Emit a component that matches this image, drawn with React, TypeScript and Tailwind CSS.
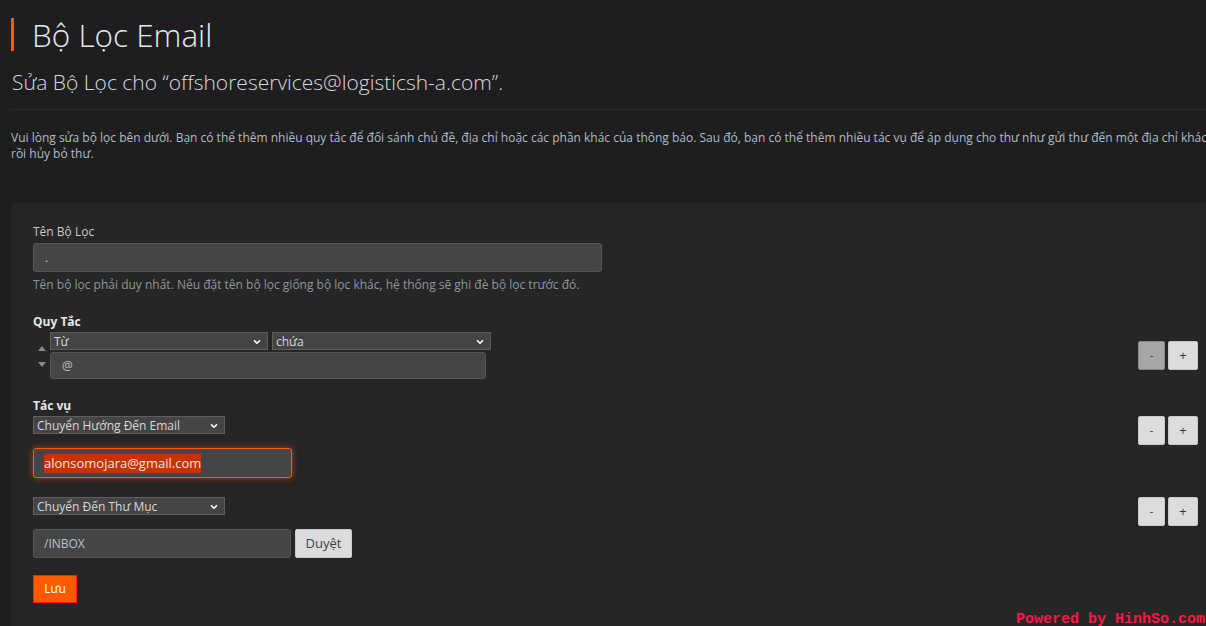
import { ChevronDown } from "lucide-react";

const font = { fontFamily: '"Open Sans", "Noto Sans", sans-serif' };

const Select = ({ value, width }: { value: string; width: string }) => {
  return (
    <div className={`relative h-[18px] ${width} border border-[#5e5e5e] bg-[#444] text-[12px] leading-[17px] text-[#d8d8d8]`}>
      <span className="pl-[3px]">{value}</span>
      <ChevronDown className="absolute right-[5px] top-[4px] h-[10px] w-[10px] text-white" strokeWidth={4} />
    </div>
  );
};

const PlusMinus = ({ disabled }: { disabled?: boolean }) => {
  return (
    <div className="flex gap-[3px]">
      <button
        className={
          disabled
            ? "w-[27px] h-[29px] rounded-[2px] border border-[#888] bg-[#a6a6a6] text-[11px] text-[#333]"
            : "w-[27px] h-[29px] rounded-[2px] border border-[#c8c8c8] bg-[#dcdcdc] text-[11px] text-[#333]"
        }
      >
        -
      </button>
      <button className="w-[30px] h-[29px] rounded-[2px] border border-[#c8c8c8] bg-[#dcdcdc] text-[13px] text-[#333]">
        +
      </button>
    </div>
  );
};

const App = () => {
  return (
    <div className="relative w-[1206px] h-[626px] overflow-hidden bg-[#1e1e1e]" style={font}>
      <div className="w-[1240px] pl-[11px]">
        <div className="mt-[18px] h-[33px] border-l-[3px] border-[#ff5a00] pl-[18px]">
          <h1 className="text-[31.5px] leading-[34px] font-light text-[#e6e9ee]">Bộ Lọc Email</h1>
        </div>
        <h2 className="mt-[18px] pl-[1px] text-[21px] leading-[26px] font-light text-[#d4dae2]">
          Sửa Bộ Lọc cho “offshoreservices@logisticsh-a.com”.
        </h2>
        <div className="mt-[14px] h-px bg-[#2b2b2b]" />
        <p className="mt-[20px] text-[12px] leading-[16px] text-[#aebccb]">
          Vui lòng sửa bộ lọc bên dưới. Bạn có thể thêm nhiều quy tắc để đối sánh chủ đề, địa chỉ hoặc các phần khác của
          thông báo. Sau đó, bạn có thể thêm nhiều tác vụ để áp dụng cho thư như gửi thư đến một địa chỉ khác,
          <br />
          rồi hủy bỏ thư.
        </p>

        <div className="mt-[41px] h-[500px] w-[1200px] rounded-tl-[4px] bg-[#262626] pl-[22px] pr-[13px] pt-[21px]">
          <div className="text-[12px] leading-[16px] text-[#c8c8c8]">Tên Bộ Lọc</div>
          <div className="mt-[3px] flex h-[29px] w-[569px] items-center rounded-[3px] border border-[#555] bg-[#454545] pl-[11px] text-[12px] text-[#ccc]">
            .
          </div>
          <div className="mt-[5px] text-[12px] leading-[16px] text-[#8e969e]">
            Tên bộ lọc phải duy nhất. Nếu đặt tên bộ lọc giống bộ lọc khác, hệ thống sẽ ghi đè bộ lọc trước đó.
          </div>

          <div className="mt-[21px] text-[12px] leading-[16px] font-bold text-[#e6e6e6]">Quy Tắc</div>
          <div className="mt-[2px] flex items-center justify-between">
            <div className="flex">
              <div className="flex w-[17px] flex-col items-center pt-[13px]">
                <svg width="10" height="6" viewBox="0 0 10 6">
                  <path d="M1 6 L5 1 L9 6 Z" fill="#8a8a8a" />
                </svg>
                <svg width="10" height="6" viewBox="0 0 10 6" className="mt-[11px]">
                  <path d="M1 0 L9 0 L5 5 Z" fill="#8a8a8a" />
                </svg>
              </div>
              <div className="flex flex-col gap-[2px]">
                <div className="flex gap-[4px]">
                  <Select value="Từ" width="w-[218px]" />
                  <Select value="chứa" width="w-[219px]" />
                </div>
                <div className="flex h-[27px] w-[436px] items-center rounded-[3px] border border-[#555] bg-[#454545] pl-[11px] text-[12px] text-[#b8c4d0]">
                  @
                </div>
              </div>
            </div>
            <PlusMinus disabled />
          </div>

          <div className="mt-[19px] text-[12px] leading-[16px] font-bold text-[#e6e6e6]">Tác vụ</div>
          <div className="mt-[2px] flex items-start justify-between">
            <div className="flex flex-col gap-[14px]">
              <Select value="Chuyển Hướng Đến Email" width="w-[192px]" />
              <div className="flex h-[30px] w-[259px] items-center rounded-[3px] border border-[#ff5a00] bg-[#454545] pl-[10px] text-[13px] text-[#e6e6e6] shadow-[0_0_6px_rgba(255,90,0,0.6)]">
                <span className="bg-[#c83200] leading-[19px]">alonsomojara@gmail.com</span>
              </div>
            </div>
            <PlusMinus />
          </div>

          <div className="mt-[19px] flex items-start justify-between">
            <div className="flex flex-col gap-[14px]">
              <Select value="Chuyển Đến Thư Mục" width="w-[192px]" />
              <div className="flex gap-[4px]">
                <div className="flex h-[29px] w-[258px] items-center rounded-[3px] border border-[#555] bg-[#454545] pl-[10px] text-[12px] text-[#b8c4d0]">
                  /INBOX
                </div>
                <button className="h-[29px] w-[57px] rounded-[2px] border border-[#c8c8c8] bg-[#dcdcdc] text-[13px] text-[#3a3f48]">
                  Duyệt
                </button>
              </div>
            </div>
            <PlusMinus />
          </div>

          <button className="mt-[17px] h-[28px] w-[44px] border border-[#ff1a1a] bg-[#ff5a00] text-[12px] text-white">
            Lưu
          </button>
        </div>
      </div>

      <div
        className="absolute bottom-[-2px] right-[1px] text-[15px] font-bold leading-[16px] text-[#ff1744]"
        style={{ fontFamily: '"Liberation Mono", "DejaVu Sans Mono", monospace' }}
      >
        Powered by HinhSo.com
      </div>
    </div>
  );
};

export default App;
